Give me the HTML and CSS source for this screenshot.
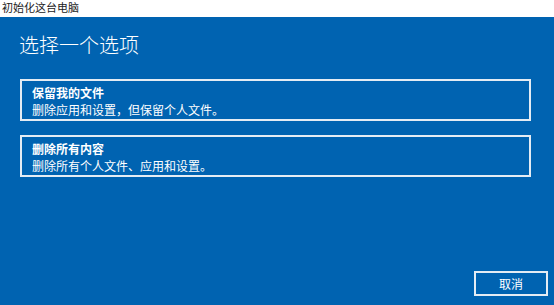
FILE: index.html
```html
<!DOCTYPE html>
<html lang="zh-CN">
<head>
<meta charset="utf-8">
<link rel="stylesheet" href="styles.css">
</head>
<body>
<div class="titlebar">初始化这台电脑</div>
<div class="main">
  <h1 class="heading">选择一个选项</h1>
  <div class="options">
    <div class="option">
      <div class="opt-title">保留我的文件</div>
      <div class="opt-desc">删除应用和设置，但保留个人文件。</div>
    </div>
    <div class="option">
      <div class="opt-title">删除所有内容</div>
      <div class="opt-desc">删除所有个人文件、应用和设置。</div>
    </div>
  </div>
  <div class="footer">
    <div class="btn">取消</div>
  </div>
</div>
</body>
</html>
```
FILE: styles.css
```css
html, body {
  margin: 0;
  padding: 0;
  width: 554px;
  height: 305px;
  overflow: hidden;
  font-family: "Noto Sans CJK SC", "Microsoft YaHei", sans-serif;
}
.titlebar {
  height: 17px;
  background: #ffffff;
  color: #222;
  font-size: 11px;
  line-height: 15px;
  padding-left: 2px;
  box-sizing: border-box;
  overflow: hidden;
}
.main {
  background: #0063b1;
  height: 288px;
  box-sizing: border-box;
  padding: 16px 0 0 20px;
  color: #fff;
  display: flex;
  flex-direction: column;
}
.heading {
  margin: 0 0 0 -1px;
  font-size: 20px;
  line-height: 24px;
  font-weight: 300;
}
.options {
  margin-top: 22px;
  display: flex;
  flex-direction: column;
  gap: 14px;
  width: 511px;
}
.option {
  border: 2px solid #e4ecf4;
  height: 42px;
  box-sizing: border-box;
  padding: 3px 10px 0;
}
.opt-title {
  font-size: 12px;
  line-height: 17px;
  font-weight: 700;
}
.opt-desc {
  font-size: 12px;
  line-height: 17px;
}
.footer {
  margin-top: auto;
  display: flex;
  justify-content: flex-end;
  padding: 0 6px 9px 0;
}
.btn {
  width: 74px;
  height: 25px;
  box-sizing: border-box;
  border: 2px solid #e4ecf4;
  font-size: 12px;
  line-height: 21px;
  text-align: center;
}
```
